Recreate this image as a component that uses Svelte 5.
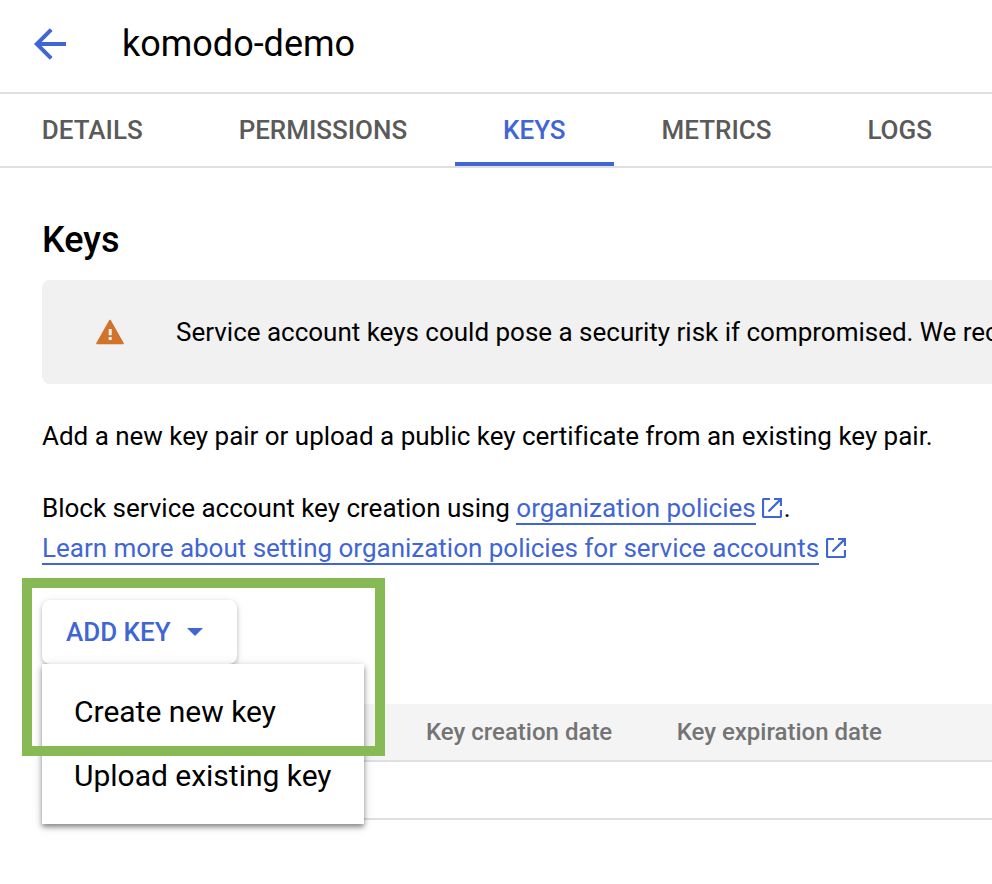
<script>
  const tabs = ['DETAILS', 'PERMISSIONS', 'KEYS', 'METRICS', 'LOGS'];
  const active = 'KEYS';
  const columns = ['Key creation date', 'Key expiration date'];
  const menu = ['Create new key', 'Upload existing key'];
</script>

{#snippet external()}
  <svg class="external" width="20" height="20" viewBox="0 0 20 20" aria-hidden="true">
    <path d="M8 1H2Q1 1 1 2V18Q1 19 2 19H18Q19 19 19 18V12M12 1H19V8M18.6 1.4L6.5 13.5" fill="none" stroke="currentColor" stroke-width="2.2" />
  </svg>
{/snippet}

<div class="page">
  <header>
    <svg width="32" height="32" viewBox="0 0 32 32" aria-label="Back">
      <path d="M32 16H3M17.2 1.6L2.8 16L17.2 30.4" fill="none" stroke="#3f66d4" stroke-width="4" />
    </svg>
    <h1>komodo-demo</h1>
  </header>

  <nav>
    {#each tabs as tab}
      <div class="tab" class:active={tab === active}>{tab}</div>
    {/each}
  </nav>

  <main>
    <h2>Keys</h2>

    <div class="notice">
      <svg width="28" height="26" viewBox="0 0 28 26" aria-hidden="true">
        <path d="M14 1.5L27 24.5H1Z" fill="#d1732a" stroke="#d1732a" stroke-width="1.6" stroke-linejoin="round" />
        <path d="M12.7 10h3v6.2h-3zM12.7 18h3v3h-3z" fill="#f1f1f1" />
      </svg>
      <span>Service account keys could pose a security risk if compromised. We reco</span>
    </div>

    <p class="intro">Add a new key pair or upload a public key certificate from an existing key pair.</p>

    <div class="policy">
      <div class="line">
        <span class="block">Block service account key creation using</span>
        <span class="link org">organization policies</span>
        {@render external()}<span class="dot">.</span>
      </div>
      <div class="line">
        <span class="link learn">Learn more about setting organization policies for service accounts</span>
        {@render external()}
      </div>
    </div>

    <div class="actions">
      <div class="button">
        <span>ADD KEY</span>
        <svg width="16" height="8" viewBox="0 0 16 8" aria-hidden="true"><path d="M0 0H16L8 8Z" fill="#3f66d4" /></svg>
      </div>
      <div class="menu">
        {#each menu as item}
          <div class="item">{item}</div>
        {/each}
      </div>
      <div class="highlight"></div>
    </div>

    <div class="table">
      <div class="head">
        {#each columns as column}
          <span>{column}</span>
        {/each}
      </div>
      <div class="row"></div>
    </div>
  </main>
</div>

<style>
  :global(body) {
    margin: 0;
    background: #fff;
    overflow: hidden;
  }
  .page {
    width: 992px;
    height: 884px;
    overflow: hidden;
    background: #fff;
    color: #000;
    font-family: Roboto, 'Liberation Sans', sans-serif;
    font-size: 26px;
    letter-spacing: -0.01px;
    white-space: nowrap;
  }
  svg {
    flex: none;
    display: block;
  }
  header {
    box-sizing: border-box;
    height: 94px;
    padding: 0 0 4px 34px;
    border-bottom: 2px solid #e0e0e0;
    display: flex;
    align-items: center;
    gap: 56px;
  }
  h1 {
    margin: 0;
    font-size: 36px;
    font-weight: 400;
    line-height: 48px;
  }
  nav {
    box-sizing: border-box;
    height: 74px;
    margin-left: -6.2px;
    border-bottom: 2px solid #e0e0e0;
    display: flex;
  }
  .tab {
    box-sizing: border-box;
    height: 72px;
    padding: 0 48px;
    border-bottom: 4px solid transparent;
    color: #5a5a5a;
    font-weight: 500;
    line-height: 72px;
    letter-spacing: -0.02px;
  }
  .tab.active {
    color: #3f66d4;
    border-bottom-color: #3f66d4;
  }
  main {
    padding-left: 42px;
  }
  h2 {
    margin: 0;
    padding-top: 48px;
    height: 64px;
    font-size: 36px;
    font-weight: 500;
    line-height: 48px;
  }
  .notice {
    box-sizing: border-box;
    height: 104px;
    padding-left: 54px;
    border-radius: 8px 0 0 8px;
    background: #f1f1f1;
    display: flex;
    align-items: center;
    gap: 52px;
    overflow: hidden;
  }
  .intro {
    margin: 32px 0;
    line-height: 40px;
    letter-spacing: -0.015px;
  }
  .line {
    display: flex;
    align-items: center;
    height: 40px;
  }
  .link {
    color: #3f66d4;
    line-height: 30px;
    border-bottom: 2px solid #3f66d4;
    margin-right: 6.5px;
    position: relative;
    top: 1px;
  }
  .link.org {
    margin-right: 6.1px;
  }
  .block {
    margin-right: 6.4px;
  }
  .external {
    color: #3f66d4;
  }
  .dot {
    margin-left: 2px;
  }
  .actions {
    position: relative;
    height: 136px;
    padding-top: 32px;
    box-sizing: border-box;
  }
  .button {
    box-sizing: border-box;
    width: 195px;
    height: 64px;
    padding-left: 24px;
    border-radius: 8px;
    background: #fff;
    box-shadow: 0 2px 4px rgba(0, 0, 0, 0.24), 0 1px 10px rgba(0, 0, 0, 0.08);
    color: #3f66d4;
    font-weight: 500;
    display: flex;
    align-items: center;
    gap: 16px;
  }
  .menu {
    position: absolute;
    z-index: 1;
    top: 96px;
    left: 0;
    box-sizing: border-box;
    width: 322px;
    height: 160px;
    padding: 16px 0;
    background: #fff;
    box-shadow: 0 3px 5px rgba(0, 0, 0, 0.42), 0 2px 12px rgba(0, 0, 0, 0.12);
  }
  .item {
    padding-left: 32px;
    font-size: 30px;
    line-height: 64px;
  }
  .highlight {
    position: absolute;
    z-index: 2;
    top: 10px;
    left: -20px;
    box-sizing: border-box;
    width: 363px;
    height: 178px;
    border: 10px solid #87b955;
  }
  .head {
    box-sizing: border-box;
    height: 58px;
    padding-left: 384px;
    border-bottom: 2px solid #e0e0e0;
    background: #f4f4f4;
    color: #747474;
    font-size: 24px;
    font-weight: 500;
    line-height: 56px;
    letter-spacing: 0;
    display: flex;
    gap: 64.4px;
  }
  .row {
    height: 56px;
    border-bottom: 2px solid #e0e0e0;
  }
</style>
